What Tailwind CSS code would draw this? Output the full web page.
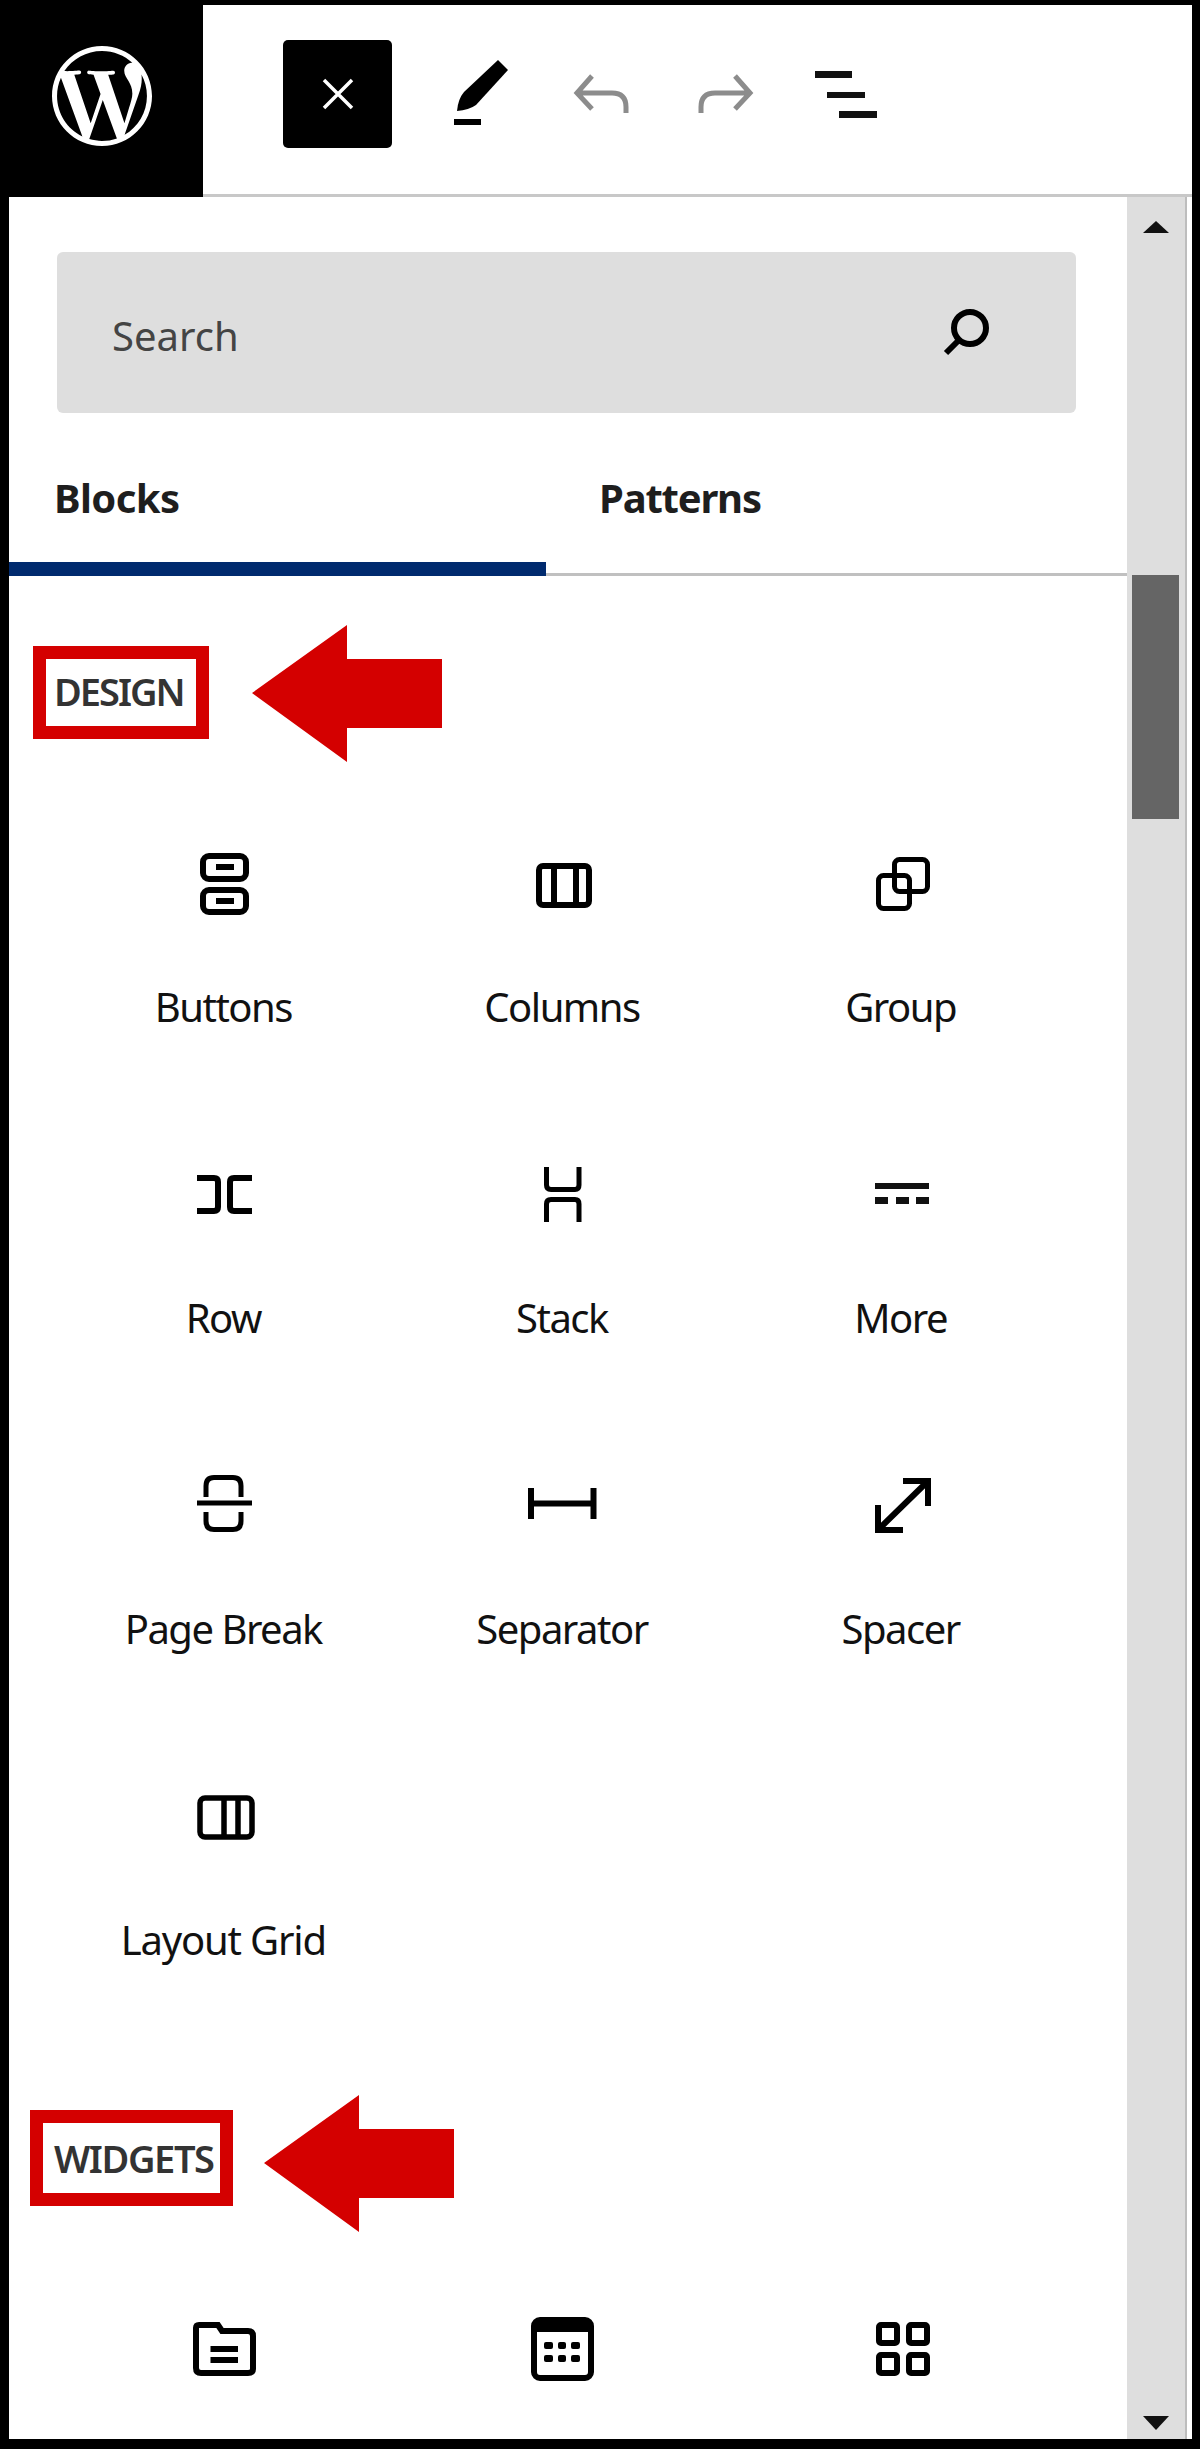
<!DOCTYPE html>
<html lang="en">
<head>
  <meta charset="UTF-8" />
  <title>Block inserter</title>
  <script src="https://cdn.jsdelivr.net/npm/@tailwindcss/browser@4"></script>
</head>
<body class="bg-black">
  <div class="w-[1200px] h-[2449px] bg-black pt-[5px] pr-[8px] pb-[10px] flex flex-col overflow-hidden font-['Noto_Sans',sans-serif]">

    <!-- Toolbar -->
    <header class="flex h-[192px] shrink-0 bg-white">
      <div class="w-[203px] bg-black flex justify-center pt-[41px]">
        <svg viewBox="0 0 24 24" class="w-[100px] h-[100px]" fill="#fff"><path d="M21.469 6.825c.84 1.537 1.318 3.3 1.318 5.175 0 3.979-2.156 7.456-5.363 9.325l3.295-9.527c.615-1.54.82-2.771.82-3.864 0-.405-.026-.78-.07-1.11m-7.981.105c.647-.03 1.232-.105 1.232-.105.582-.075.514-.93-.067-.899 0 0-1.755.135-2.88.135-1.064 0-2.85-.15-2.85-.15-.585-.03-.661.855-.075.885 0 0 .54.061 1.125.09l1.68 4.605-2.37 7.08L5.354 6.9c.649-.03 1.234-.1 1.234-.1.585-.075.516-.93-.065-.896 0 0-1.746.138-2.874.138-.2 0-.438-.008-.69-.015C4.911 3.15 8.235 1.215 12 1.215c2.809 0 5.365 1.072 7.286 2.833-.046-.003-.091-.009-.141-.009-1.06 0-1.812.923-1.812 1.914 0 .89.513 1.643 1.06 2.531.411.72.89 1.643.89 2.977 0 .915-.354 1.994-.821 3.479l-1.075 3.585-3.9-11.61.001.014zM12 22.784c-1.059 0-2.081-.153-3.048-.437l3.237-9.406 3.315 9.087c.024.053.05.101.078.149-1.12.393-2.325.609-3.582.609M1.211 12c0-1.564.336-3.05.935-4.39L7.29 21.709C3.694 19.96 1.212 16.271 1.211 12M12 0C5.385 0 0 5.385 0 12s5.385 12 12 12 12-5.385 12-12S18.615 0 12 0"/></svg>
      </div>
      <div class="flex-1 border-b-[3px] border-[#c8c8c8] flex items-start pl-[80px] pt-[35px]">
        <div class="w-[109px] h-[108px] bg-black rounded-[5px] flex items-center justify-center">
          <svg viewBox="0 0 32 32" class="w-[32px] h-[32px]" stroke="#fff" stroke-width="3.5" fill="none"><path d="M2 2 30 30M30 2 2 30"/></svg>
        </div>
        <svg viewBox="0 0 72 72" class="w-[72px] h-[72px] mt-[19px] ml-[53px]"><path d="M53 1 63 11 31 46Q24 51 12 52 13 40 19 33Z" fill="#000"/><rect x="9" y="60" width="27" height="6" fill="#000"/></svg>
        <svg viewBox="0 0 72 72" class="w-[72px] h-[72px] mt-[19px] ml-[49px]" fill="none" stroke="#8c8c8c" stroke-width="5"><path d="M26 17 11 34 26 50M11 34H46Q60 34 60 48V54"/></svg>
        <svg viewBox="0 0 72 72" class="w-[72px] h-[72px] mt-[19px] ml-[51px]" fill="none" stroke="#8c8c8c" stroke-width="5"><path d="M46 17 61 34 46 50M61 34H26Q12 34 12 48V54"/></svg>
        <svg viewBox="0 0 72 72" class="w-[72px] h-[72px] mt-[19px] ml-[48px]" fill="#111"><rect x="6" y="12" width="37" height="7"/><rect x="18" y="33" width="38" height="6"/><rect x="30" y="52" width="38" height="7"/></svg>
      </div>
    </header>

    <!-- Panel -->
    <div class="flex-1 min-h-0 ml-[9px] flex bg-white">
      <main class="w-[1118px] overflow-hidden bg-white">
        <div class="mt-[55px] ml-[48px] w-[1019px] h-[161px] bg-[#dedede] rounded-[6px] flex items-center justify-between pl-[55px] pr-[84px]">
          <span class="mt-[6px] text-[40px] text-[#444]">Search</span>
          <svg viewBox="0 0 50 50" class="w-[50px] h-[50px]" fill="none" stroke="#000" stroke-width="6"><circle cx="28" cy="20" r="16"/><path d="M16 33 4 45"/></svg>
        </div>

        <div class="flex h-[163px] border-b-[3px] border-[#c0c0c0] relative">
          <div class="w-[537px] pl-[45px] pt-[55px] text-[40px] font-bold tracking-[-0.6px] text-[#1e1e1e]">Blocks</div>
          <div class="flex-1 pl-[53px] pt-[55px] text-[40px] font-bold tracking-[-1.2px] text-[#1e1e1e]">Patterns</div>
          <div class="absolute left-0 -bottom-[3px] w-[537px] h-[14px] bg-[#002a6e]"></div>
        </div>

        <!-- Design -->
        <section class="relative h-[1534px]">
          <div class="absolute left-[24px] top-[70px] w-[176px] h-[93px] border-[13px] border-[#d40000] flex items-center pl-[8px]">
            <span class="-mt-[2px] text-[38px] font-semibold tracking-[-2px] text-[#333]">DESIGN</span>
          </div>
          <svg viewBox="0 0 190 137" class="absolute left-[243px] top-[49px] w-[190px] h-[137px]" fill="#d40000"><path d="M0 68 95 0V34H190V103H95V137Z"/></svg>

          <div class="absolute left-[45px] top-[275px] w-[1016px] grid grid-cols-3 auto-rows-[311px] text-[40px] tracking-[-1.5px] text-[#111] text-center">
            <div class="flex flex-col items-center">
              <svg viewBox="0 0 72 72" class="w-[72px] h-[72px]" fill="none" stroke="#000" stroke-width="6"><rect x="16" y="5" width="43" height="23" rx="6"/><rect x="16" y="39" width="43" height="22" rx="6"/><path d="M29 16H47M29 50H47"/></svg>
              <span class="mt-[54px]">Buttons</span>
            </div>
            <div class="flex flex-col items-center">
              <svg viewBox="0 0 72 72" class="w-[72px] h-[72px]" fill="none" stroke="#000" stroke-width="6"><rect x="13" y="15" width="50" height="39" rx="4"/><path d="M28 15V54M50 15V54"/></svg>
              <span class="mt-[54px]">Columns</span>
            </div>
            <div class="flex flex-col items-center">
              <svg viewBox="0 0 72 72" class="w-[72px] h-[72px]" fill="none" stroke="#000" stroke-width="5"><rect x="29.5" y="8.5" width="33" height="32" rx="5"/><rect x="13.5" y="24.5" width="31" height="33" rx="5"/></svg>
              <span class="mt-[54px]">Group</span>
            </div>
            <div class="flex flex-col items-center">
              <svg viewBox="0 0 72 72" class="w-[72px] h-[72px]" fill="none" stroke="#000" stroke-width="6"><path d="M10 16H27Q31 16 31 20V45Q31 49 27 49H10M65 16H47Q43 16 43 20V45Q43 49 47 49H65"/></svg>
              <span class="mt-[54px]">Row</span>
            </div>
            <div class="flex flex-col items-center">
              <svg viewBox="0 0 72 72" class="w-[72px] h-[72px]" fill="none" stroke="#000" stroke-width="5"><path d="M20.5 5V23Q20.5 27.5 25 27.5H49Q53 27.5 53 23V5M20.5 60V42Q20.5 37.5 25 37.5H49Q53 37.5 53 42V60"/></svg>
              <span class="mt-[54px]">Stack</span>
            </div>
            <div class="flex flex-col items-center">
              <svg viewBox="0 0 72 72" class="w-[72px] h-[72px]" fill="#111"><rect x="10" y="21" width="54" height="6"/><rect x="10" y="35" width="13" height="7"/><rect x="31" y="35" width="13" height="7"/><rect x="51" y="35" width="13" height="7"/></svg>
              <span class="mt-[54px]">More</span>
            </div>
            <div class="flex flex-col items-center">
              <svg viewBox="0 0 72 72" class="w-[72px] h-[72px]" fill="none" stroke="#000" stroke-width="5"><path d="M19 24V13Q19 4.5 27 4.5H46Q54 4.5 54 13V24M10 30H65M19 39V48Q19 56.5 27 56.5H46Q54 56.5 54 48V39"/></svg>
              <span class="mt-[54px]">Page Break</span>
            </div>
            <div class="flex flex-col items-center">
              <svg viewBox="0 0 72 72" class="w-[72px] h-[72px]" fill="none" stroke="#000" stroke-width="6"><path d="M5 15V46M67.5 15V46M5 30.5H67.5"/></svg>
              <span class="mt-[54px]">Separator</span>
            </div>
            <div class="flex flex-col items-center">
              <svg viewBox="0 0 72 72" class="w-[72px] h-[72px]" fill="none" stroke="#000" stroke-width="6"><path d="M16 54 60 11M38 8H63V33M13 32V57H38"/></svg>
              <span class="mt-[54px]">Spacer</span>
            </div>
            <div class="flex flex-col items-center">
              <svg viewBox="0 0 72 72" class="w-[72px] h-[72px]" fill="none" stroke="#000" stroke-width="5.5"><rect x="13" y="14" width="52" height="39" rx="5"/><path d="M37 14V53M51 14V53"/></svg>
              <span class="mt-[54px] tracking-[-1.2px]">Layout Grid</span>
            </div>
          </div>
        </section>

        <!-- Widgets -->
        <section class="relative h-[330px]">
          <div class="absolute left-[21px] top-0 w-[203px] h-[96px] border-[13px] border-[#d40000] flex items-center pl-[11px]">
            <span class="text-[38px] font-semibold tracking-[-1.4px] text-[#333]">WIDGETS</span>
          </div>
          <svg viewBox="0 0 190 137" class="absolute left-[255px] -top-[15px] w-[190px] h-[137px]" fill="#d40000"><path d="M0 68 95 0V34H190V103H95V137Z"/></svg>
          <div class="absolute left-[45px] top-[203px] w-[1016px] grid grid-cols-3">
            <div class="flex justify-center">
              <svg viewBox="0 0 72 72" class="w-[72px] h-[72px]" fill="none" stroke="#000" stroke-width="6"><path d="M9 15Q9 12 12 12H31L35 18H61Q66 18 66 23V56Q66 60 61 60H14Q9 60 9 55Z"/><path d="M23.5 36H51M23.5 47H51"/></svg>
            </div>
            <div class="flex justify-center">
              <svg viewBox="0 0 72 72" class="w-[72px] h-[72px]" fill="none" stroke="#000" stroke-width="6"><rect x="8" y="7" width="57" height="58" rx="6"/><path d="M8 13H65" stroke-width="12"/><g fill="#000" stroke="none"><rect x="18" y="29" width="9" height="7" rx="2"/><rect x="32" y="29" width="8" height="7" rx="2"/><rect x="45" y="29" width="9" height="7" rx="2"/><rect x="18" y="42" width="9" height="7" rx="2"/><rect x="32" y="42" width="8" height="7" rx="2"/><rect x="45" y="42" width="9" height="7" rx="2"/></g></svg>
            </div>
            <div class="flex justify-center">
              <svg viewBox="0 0 72 72" class="w-[72px] h-[72px]" fill="none" stroke="#000" stroke-width="6"><rect x="14" y="12" width="18" height="18" rx="2"/><rect x="44" y="12" width="18" height="18" rx="2"/><rect x="14" y="42" width="18" height="18" rx="2"/><rect x="44" y="42" width="18" height="18" rx="2"/></svg>
            </div>
          </div>
        </section>
      </main>

      <!-- Scrollbar -->
      <div class="w-[58px] bg-[#dedede] flex flex-col items-center justify-between py-[24px] relative">
        <svg viewBox="0 0 26 12" class="w-[26px] h-[12px]" fill="#111"><path d="M13 0 26 12H0Z"/></svg>
        <svg viewBox="0 0 26 14" class="w-[26px] h-[14px] -mb-[15px]" fill="#111"><path d="M13 14 26 0H0Z"/></svg>
        <div class="absolute left-[5px] top-[378px] w-[47px] h-[244px] bg-[#656565]"></div>
      </div>
      <div class="w-[2px] bg-[#bdbdbd]"></div>
      <div class="w-[5px] bg-white"></div>
    </div>
  </div>
</body>
</html>
